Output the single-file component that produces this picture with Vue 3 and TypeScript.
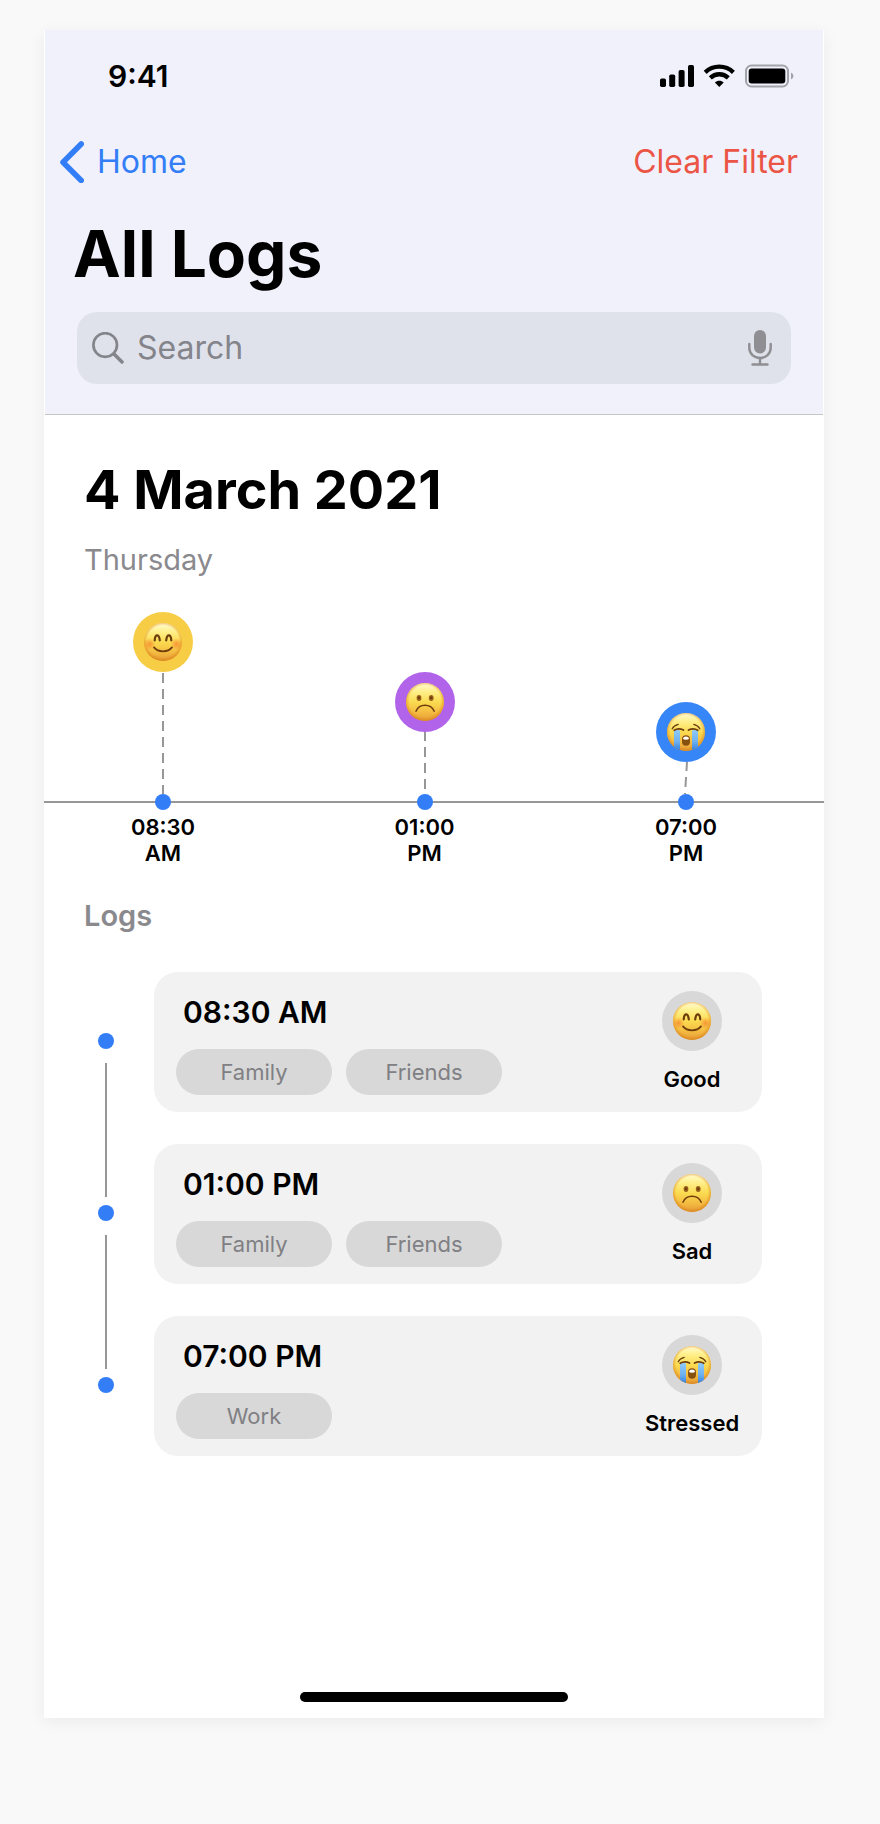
<script setup lang="ts">
import { ref } from 'vue'

type Mood = 'good' | 'sad' | 'stressed'

interface LogEntry {
  time: string
  period: string
  mood: Mood
  label: string
  tags: string[]
  stem: number
  dashOffset: number
  lean: number
}

const query = ref('')

const logs: LogEntry[] = [
  { time: '08:30', period: 'AM', mood: 'good', label: 'Good', tags: ['Family', 'Friends'], stem: 122, dashOffset: -1, lean: 0 },
  { time: '01:00', period: 'PM', mood: 'sad', label: 'Sad', tags: ['Family', 'Friends'], stem: 62, dashOffset: 1, lean: 0 },
  { time: '07:00', period: 'PM', mood: 'stressed', label: 'Stressed', tags: ['Work'], stem: 32, dashOffset: 1, lean: 1 },
]
</script>

<template>
  <svg class="sprite" aria-hidden="true">
    <defs>
      <linearGradient id="skin" x1="0" y1="0" x2="0" y2="1">
        <stop offset="0" stop-color="#fffbd2" />
        <stop offset="0.22" stop-color="#fff08c" />
        <stop offset="0.5" stop-color="#fadb50" />
        <stop offset="0.8" stop-color="#f3b740" />
        <stop offset="1" stop-color="#e39a36" />
      </linearGradient>
      <radialGradient id="rim" cx="0.5" cy="0.48" r="0.53">
        <stop offset="0.78" stop-color="#e08a1c" stop-opacity="0" />
        <stop offset="1" stop-color="#d87d16" stop-opacity="0.75" />
      </radialGradient>
      <radialGradient id="blush">
        <stop offset="0" stop-color="#f76a26" stop-opacity="0.6" />
        <stop offset="1" stop-color="#f76a26" stop-opacity="0" />
      </radialGradient>
      <linearGradient id="tears" x1="0" y1="0" x2="0" y2="1">
        <stop offset="0" stop-color="#8fc9f7" />
        <stop offset="0.55" stop-color="#6fb2f0" />
        <stop offset="1" stop-color="#2f7de0" />
      </linearGradient>
      <clipPath id="face-clip"><circle cx="19" cy="19" r="19" /></clipPath>
    </defs>
    <symbol id="mood-good" viewBox="0 0 38 38">
      <circle cx="19" cy="19" r="19" fill="url(#skin)" />
      <circle cx="19" cy="19" r="19" fill="url(#rim)" />
      <g clip-path="url(#face-clip)">
        <circle cx="5.500" cy="21" r="6" fill="url(#blush)" />
        <circle cx="32.500" cy="21" r="6" fill="url(#blush)" />
      </g>
      <g fill="none" stroke="#6e3d0c" stroke-linecap="round">
        <path d="M10.700 17.300C11.200 10.800 15 10.800 15.800 17.300" stroke-width="2.200" />
        <path d="M22.200 17.300C23 10.800 26.800 10.800 27.300 17.300" stroke-width="2.200" />
        <path d="M10 24.400C14 29.600 24 29.600 28 24.400" stroke-width="1.800" />
      </g>
    </symbol>
    <symbol id="mood-sad" viewBox="0 0 38 38">
      <circle cx="19" cy="19" r="19" fill="url(#skin)" />
      <circle cx="19" cy="19" r="19" fill="url(#rim)" />
      <ellipse cx="13" cy="15" rx="2.400" ry="2.900" fill="#9a601a" />
      <ellipse cx="25.200" cy="15" rx="2.400" ry="2.900" fill="#9a601a" />
      <circle cx="13" cy="14.700" r="1.200" fill="#6b3c0c" />
      <circle cx="25.200" cy="14.700" r="1.200" fill="#6b3c0c" />
      <path d="M10 28.200C13.500 20.300 24.500 20.300 28.200 28.200" fill="none" stroke="#6e3d0c" stroke-width="1.500" stroke-linecap="round" />
    </symbol>
    <symbol id="mood-stressed" viewBox="0 0 38 38">
      <circle cx="19" cy="19" r="19" fill="url(#skin)" />
      <circle cx="19" cy="19" r="19" fill="url(#rim)" />
      <g clip-path="url(#face-clip)">
        <path d="M7 17.500Q10 16 13 17.500V38H7Z" fill="url(#tears)" />
        <path d="M25 17.500Q28 16 31 17.500V38H25Z" fill="url(#tears)" />
      </g>
      <g fill="none" stroke="#6e3d0c" stroke-linecap="round">
        <path d="M5.200 15.800Q7 12.300 11.200 11.300" stroke-width="1.300" />
        <path d="M32.800 15.800Q31 12.300 26.800 11.300" stroke-width="1.300" />
        <path d="M7.200 17.300Q11.500 14.500 16.500 17.100" stroke-width="1.700" />
        <path d="M30.800 17.300Q26.500 14.500 21.500 17.100" stroke-width="1.700" />
      </g>
      <rect x="15" y="22.300" width="8" height="10.500" rx="4" fill="#86500f" />
      <path d="M16 25.500C16.500 22.700 21.500 22.700 22 25.500Q21.800 26.800 19 26.800T16 25.500Z" fill="#fff" />
    </symbol>
  </svg>

  <main class="screen">
    <header class="header">
      <div class="status">
        <time>9:41</time>
        <svg class="status-icons" width="134" height="24" viewBox="0 0 134 24" aria-hidden="true">
          <rect x="0" y="14.500" width="6" height="8.500" rx="1.700" />
          <rect x="9.200" y="10.500" width="6" height="12.500" rx="1.700" />
          <rect x="18.600" y="6" width="6" height="17" rx="1.700" />
          <rect x="28" y="1" width="6" height="22" rx="1.700" />
          <g fill="none" stroke="#000">
            <path d="M45.200 8.400C53 .8 65.600 .8 73.400 8.400" stroke-width="4.300" />
            <path d="M50.300 13.900C55.400 9 63.200 9 68.300 13.900" stroke-width="4.300" />
          </g>
          <path d="M54.900 18.500C57.400 16 61.200 16 63.700 18.500L59.300 22.900Z" />
          <rect x="86" y="1.500" width="42" height="21" rx="5.500" fill="none" stroke="#a3a3aa" stroke-width="2" />
          <rect x="88.700" y="4.500" width="36.600" height="15" rx="3" />
          <path d="M131 8.500Q133.500 9.500 133.500 12T131 15.500Z" fill="#a3a3aa" />
        </svg>
      </div>

      <nav class="nav">
        <a class="back" href="#home">
          <svg width="24" height="42" viewBox="0 0 24 42" aria-hidden="true">
            <path d="M21.200 3L3 21.200L21.200 39.400" />
          </svg>
          <span>Home</span>
        </a>
        <button class="clear" type="button" @click="query = ''">Clear Filter</button>
      </nav>

      <h1>All Logs</h1>

      <label class="search">
        <svg class="lens" width="32" height="32" viewBox="0 0 32 32" aria-hidden="true">
          <circle cx="13.200" cy="13" r="11.800" />
          <path d="M22 22L30 30" stroke-width="3.500" />
        </svg>
        <input v-model="query" type="text" placeholder="Search" aria-label="Search" />
        <button class="mic" type="button" aria-label="Dictate">
          <svg width="24" height="36" viewBox="0 0 24 36" aria-hidden="true">
            <rect x="6" y="0" width="12" height="23.500" rx="6" fill="#8e8e93" />
            <g fill="none" stroke="#8e8e93" stroke-width="2.400" stroke-linecap="round">
              <path d="M1.300 14V17.500C1.300 24 6 28 12 28S22.700 24 22.700 17.500V14" />
              <path d="M12 28V34M4.500 34.500H19.500" />
            </g>
          </svg>
        </button>
      </label>
    </header>

    <section class="day">
      <h2>4 March 2021</h2>
      <p class="weekday">Thursday</p>
    </section>

    <section class="timeline" aria-label="Mood timeline">
      <div v-for="log in logs" :key="log.time" class="point">
        <span class="badge" :class="log.mood">
          <svg width="38" height="38" aria-hidden="true"><use :href="`#mood-${log.mood}`" /></svg>
        </span>
        <svg class="stem" width="6" :height="log.stem" aria-hidden="true">
          <line :x1="3 + log.lean" y1="0" :x2="3 - log.lean" :y2="log.stem" :stroke-dashoffset="log.dashOffset" />
        </svg>
        <span class="dot"></span>
        <span class="stamp">{{ log.time }}<br />{{ log.period }}</span>
      </div>
    </section>

    <h3>Logs</h3>

    <section class="logs">
      <div class="rail" aria-hidden="true">
        <template v-for="(log, index) in logs" :key="log.time">
          <span v-if="index > 0" class="link"></span>
          <span class="dot"></span>
        </template>
      </div>
      <ul class="cards">
        <li v-for="log in logs" :key="log.time" class="card">
          <div class="details">
            <h4>{{ log.time }} {{ log.period }}</h4>
            <div class="tags">
              <span v-for="tag in log.tags" :key="tag" class="tag">{{ tag }}</span>
            </div>
          </div>
          <div class="mood">
            <span class="badge">
              <svg width="38" height="38" aria-hidden="true"><use :href="`#mood-${log.mood}`" /></svg>
            </span>
            <span class="mood-label">{{ log.label }}</span>
          </div>
        </li>
      </ul>
    </section>

    <div class="home-bar"></div>
  </main>
</template>

<style>
body {
  background: #f9f9f9;
}

#app {
  padding: 30px 56px 106px 44px;
}
</style>

<style scoped>
.sprite {
  position: absolute;
  width: 0;
  height: 0;
}

.screen {
  display: flex;
  flex-direction: column;
  padding-bottom: 16px;
  background: #fff;
  box-shadow: 0 4px 16px rgba(0, 0, 0, 0.06);
  color: #000;
  font-family: Inter, "Liberation Sans", sans-serif;
}

h1,
h2,
h3,
h4,
p,
ul {
  margin: 0;
  padding: 0;
}

button,
input {
  border: 0;
  padding: 0;
  background: none;
  font: inherit;
}

.header {
  margin: 0 1px;
  padding: 28px 25px 30px 15px;
  border-bottom: 1px solid #c6c6c8;
  background: #f1f1fc;
}

.status {
  display: flex;
  justify-content: space-between;
  align-items: center;
  padding: 0 4px 0 48px;
  font-size: 30px;
  font-weight: 600;
  line-height: 36px;
}

.nav {
  display: flex;
  justify-content: space-between;
  margin-top: 47px;
  font-size: 32px;
  line-height: 42px;
}

.back {
  display: flex;
  gap: 13px;
  color: #337ef7;
  text-decoration: none;
}

.back path {
  fill: none;
  stroke: #337ef7;
  stroke-width: 5.600;
  stroke-linecap: round;
  stroke-linejoin: round;
}

.clear {
  color: #eb5545;
  cursor: pointer;
}

h1 {
  margin: 31px 0 0 13px;
  font-size: 64px;
  font-weight: 700;
  line-height: 80px;
}

.search {
  display: flex;
  align-items: center;
  height: 72px;
  margin: 18px 7px 0 17px;
  padding: 0 19px 0 15px;
  border-radius: 20px;
  background: #e0e2eb;
}

.lens {
  flex: none;
  margin-right: 13px;
  fill: none;
  stroke: #84848b;
  stroke-width: 2.700;
  stroke-linecap: round;
}

.search input {
  flex: 1;
  min-width: 0;
  font-size: 32px;
  line-height: 42px;
  outline: none;
}

.search input::placeholder {
  color: #84848b;
  opacity: 1;
}

.mic {
  display: flex;
  cursor: pointer;
}

.day {
  padding: 41px 40px 0;
}

h2 {
  font-size: 54px;
  font-weight: 700;
  line-height: 68px;
}

.weekday {
  margin-top: 18px;
  color: #8a8a8e;
  font-size: 29px;
  line-height: 36px;
}

.timeline {
  position: relative;
  display: flex;
  justify-content: space-between;
  align-items: flex-end;
  margin-top: 34px;
  padding: 0 99px 0 80px;
}

.timeline::before {
  content: "";
  position: absolute;
  right: 0;
  bottom: 63px;
  left: 0;
  height: 2px;
  background: #979797;
}

.point {
  position: relative;
  display: flex;
  flex-direction: column;
  align-items: center;
  width: 78px;
}

.badge {
  display: flex;
  align-items: center;
  justify-content: center;
  width: 60px;
  height: 60px;
  border-radius: 50%;
  background: #d8d8d8;
}

.badge.good {
  background: #f7cd46;
}

.badge.sad {
  background: #b163ea;
}

.badge.stressed {
  background: #3786f8;
}

.stem {
  display: block;
  stroke: #979797;
  stroke-width: 2;
  stroke-dasharray: 10 6;
}

.dot {
  flex: none;
  width: 16px;
  height: 16px;
  border-radius: 50%;
  background: #337ef7;
}

.stamp {
  margin-top: 4px;
  font-size: 22px;
  font-weight: 600;
  line-height: 26px;
  text-align: center;
}

h3 {
  margin: 32px 40px 0;
  color: #8a8a8e;
  font-size: 29px;
  font-weight: 600;
  line-height: 36px;
}

.logs {
  display: flex;
  gap: 40px;
  margin-top: 38px;
  padding: 0 62px 0 54px;
}

.rail {
  display: flex;
  flex-direction: column;
  align-items: center;
  width: 16px;
  padding: 61px 0 63px;
}

.link {
  flex: 1;
  width: 2px;
  margin: 14px 0 8px;
  background: #979797;
}

.cards {
  display: flex;
  flex: 1;
  flex-direction: column;
  gap: 32px;
  list-style: none;
}

.card {
  display: flex;
  justify-content: space-between;
  padding: 0 20px 0 22px;
  border-radius: 24px;
  background: #f2f2f2;
}

.details {
  padding: 22px 0 17px;
}

h4 {
  margin-left: 7px;
  font-size: 30px;
  font-weight: 600;
  line-height: 36px;
}

.tags {
  display: flex;
  gap: 14px;
  margin-top: 19px;
}

.tag {
  width: 156px;
  border-radius: 23px;
  background: #d8d8d8;
  color: #808084;
  font-size: 22px;
  line-height: 46px;
  text-align: center;
}

.mood {
  display: flex;
  flex-direction: column;
  align-items: center;
  width: 100px;
  padding: 19px 0 20px;
}

.mood-label {
  margin-top: 15px;
  font-size: 22px;
  font-weight: 600;
  line-height: 26px;
}

.home-bar {
  align-self: center;
  width: 268px;
  height: 10px;
  margin-top: 236px;
  border-radius: 5px;
  background: #000;
}
</style>
